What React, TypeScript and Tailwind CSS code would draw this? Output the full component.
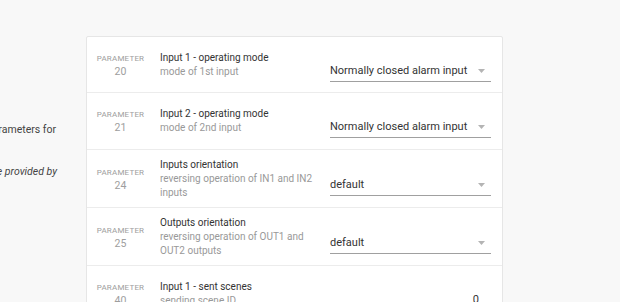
import React from "react";

type Param = {
  id: number;
  title: string;
  desc: string;
  kind: "select" | "number";
  value: string;
};

const params: Param[] = [
  { id: 20, title: "Input 1 - operating mode", desc: "mode of 1st input", kind: "select", value: "Normally closed alarm input" },
  { id: 21, title: "Input 2 - operating mode", desc: "mode of 2nd input", kind: "select", value: "Normally closed alarm input" },
  { id: 24, title: "Inputs orientation", desc: "reversing operation of IN1 and IN2 inputs", kind: "select", value: "default" },
  { id: 25, title: "Outputs orientation", desc: "reversing operation of OUT1 and OUT2 outputs", kind: "select", value: "default" },
  { id: 40, title: "Input 1 - sent scenes", desc: "sending scene ID", kind: "number", value: "0" },
];

const Field = ({ p }: { p: Param }) => {
  if (p.kind === "number") {
    return (
      <div className="w-[161px] pt-[15px] pb-[2px] border-b border-[#9e9e9e]">
        <div className="text-[11px] leading-[16px] text-[#333] text-right pr-[12px]">{p.value}</div>
      </div>
    );
  }
  return (
    <div className="w-[161px] pt-[15px] pb-[2px] border-b border-[#a0a0a0] flex items-center">
      <span className="flex-1 text-[11px] leading-[16px] text-[#333] whitespace-nowrap">{p.value}</span>
      {/* dropdown arrow */}
      <svg width="7" height="4" viewBox="0 0 7 4" className="mr-[6px]">
        <path d="M0 0h7L3.5 4z" fill="#b4b4b4" />
      </svg>
    </div>
  );
};

const Row = ({ p }: { p: Param }) => (
  <div className="flex items-center min-h-[57px] py-[7.5px] border-t border-[#ececec] first:border-t-0 first:min-h-[55px]">
    <div className="w-[67px] shrink-0 flex flex-col items-center text-[#9e9e9e]">
      <span className="text-[8px] leading-[13px] tracking-[0.2px]">PARAMETER</span>
      <span className="text-[10.5px] leading-[13px]">{p.id}</span>
    </div>
    <div className="ml-[6px] w-[156px] shrink-0">
      <div className="text-[10px] leading-[14px] text-[#333]">{p.title}</div>
      <div className="text-[10px] leading-[14px] text-[#999]">{p.desc}</div>
    </div>
    <div className="ml-auto mr-[11px]">
      <Field p={p} />
    </div>
  </div>
);

export default function App() {
  return (
    <div className="min-h-screen h-[302px] overflow-hidden bg-[#f8f8f8] flex font-['Roboto',sans-serif]">
      {/* left description, scrolled partly out of view */}
      <div className="w-[86px] shrink-0 pt-[123px] text-[10.5px] leading-[14px] text-[#444]">
        <div className="w-[56px] flex justify-end">
          <span className="whitespace-nowrap">Here you can change the parameters for</span>
        </div>
        <div className="h-[28px]" />
        <div className="w-[57px] flex justify-end">
          <span className="whitespace-nowrap italic">Descriptions of the parameters are provided by</span>
        </div>
      </div>

      <div className="w-[417px] shrink-0 mt-[36px] self-start bg-white border border-[#e6e6e6] rounded-[2px]">
        {params.map((p) => (
          <Row key={p.id} p={p} />
        ))}
      </div>
    </div>
  );
}
